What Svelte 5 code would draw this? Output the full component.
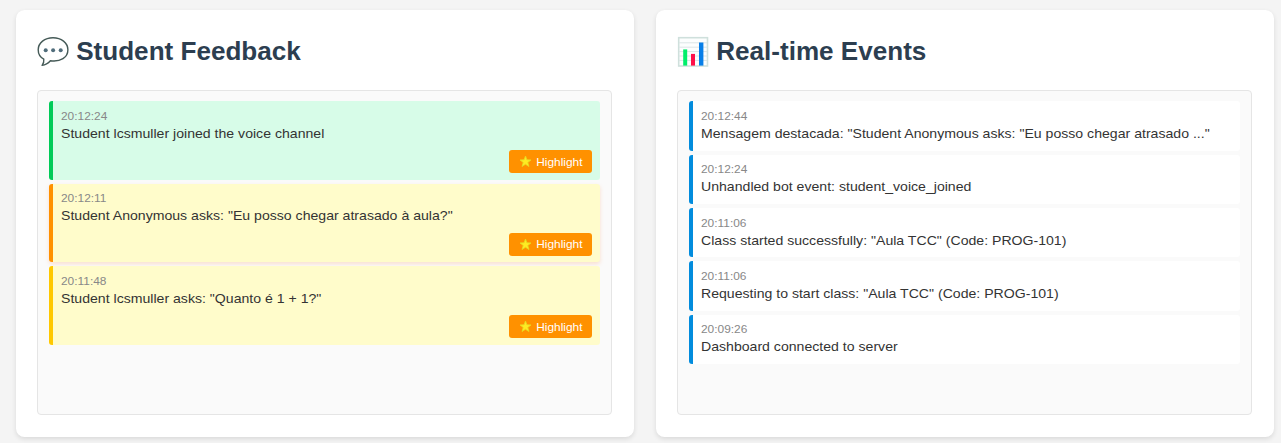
<script>
  const feedback = [
    { time: '20:12:24', text: 'Student lcsmuller joined the voice channel', kind: 'joined' },
    { time: '20:12:11', text: 'Student Anonymous asks: "Eu posso chegar atrasado à aula?"', kind: 'highlighted' },
    { time: '20:11:48', text: 'Student lcsmuller asks: "Quanto é 1 + 1?"', kind: 'question' }
  ];
  const events = [
    { time: '20:12:44', text: 'Mensagem destacada: "Student Anonymous asks: "Eu posso chegar atrasado ..."' },
    { time: '20:12:24', text: 'Unhandled bot event: student_voice_joined' },
    { time: '20:11:06', text: 'Class started successfully: "Aula TCC" (Code: PROG-101)' },
    { time: '20:11:06', text: 'Requesting to start class: "Aula TCC" (Code: PROG-101)' },
    { time: '20:09:26', text: 'Dashboard connected to server' }
  ];
</script>

<main>
  <section class="card">
    <h2>
      <svg class="icon" viewBox="0 0 32 32" aria-hidden="true">
        <path d="M16 1.700C7.800 1.700 1.200 6.800 1.200 13.700c0 4.200 2 7.500 5.600 9.400.3 2.800-.3 4.600-1.700 6.300 3.200-.4 6-2 8.300-4.600C23.600 26.200 30.900 21.500 30.900 13.700 30.900 6.800 24.200 1.700 16 1.700Z" fill="#fff" stroke="#455a57" stroke-width="1.400" stroke-linejoin="round" />
        <circle cx="8.700" cy="14.200" r="2" fill="#506d7b" />
        <circle cx="16.100" cy="14.200" r="2" fill="#506d7b" />
        <circle cx="23.700" cy="14.200" r="2" fill="#506d7b" />
      </svg>
      <span>Student Feedback</span>
    </h2>
    <div class="feed">
      {#each feedback as item}
        <article class="item {item.kind}">
          <time>{item.time}</time>
          <p>{item.text}</p>
          <button>
            <svg class="star" viewBox="0 0 14 14" aria-hidden="true">
              <path d="M7 1.100 8.500 5.200 12.900 5.350 9.450 8 10.700 12.400 7 9.900 3.300 12.400 4.550 8 1.100 5.350 5.500 5.200Z" fill="#ffeb22" stroke="#e4dc22" stroke-width=".9" stroke-linejoin="round" />
            </svg>
            <span class="label">Highlight</span>
          </button>
        </article>
      {/each}
    </div>
  </section>

  <section class="card">
    <h2>
      <svg class="icon" viewBox="0 0 32 32" aria-hidden="true">
        <rect x="1.700" y="1.700" width="28.800" height="28.300" fill="#fcfefe" stroke="#cfe0dc" stroke-width="1.600" />
        <path d="M2 6.800H30M2 11.200H30M2 15.600H30M2 20H30M2 24.400H30" stroke="#dce5e6" stroke-width="1" />
        <path d="M6.200 13.400h4v16.200h-4z" fill="#00ef6b" />
        <path d="M14 17.900h4v11.700h-4z" fill="#ff1049" />
        <path d="M22 6.500h4.400v23.100H22z" fill="#087fe8" />
      </svg>
      <span>Real-time Events</span>
    </h2>
    <div class="feed">
      {#each events as item}
        <article class="item event">
          <time>{item.time}</time>
          <p>{item.text}</p>
        </article>
      {/each}
    </div>
  </section>
</main>

<style>
  :global(body) {
    margin: 0;
    background: #f4f4f4;
    overflow: hidden;
  }
  main {
    box-sizing: border-box;
    width: 1281px;
    height: 443px;
    padding: 9.5px 6.8px 0 15.6px;
    display: grid;
    grid-template-columns: 1fr 1fr;
    align-items: start;
    gap: 21.4px;
    color: #333;
    font-family: "Liberation Sans", Arial, sans-serif;
  }
  .card {
    box-sizing: border-box;
    height: 427.3px;
    padding: 0 22.1px 0 21.6px;
    background: #fff;
    border-radius: 8.6px;
    box-shadow: 0 2px 5px rgba(0, 0, 0, .11);
  }
  h2 {
    display: flex;
    align-items: center;
    gap: 7px;
    height: 80.5px;
    padding-top: 3px;
    box-sizing: border-box;
    margin: 0;
    color: #2c3e50;
    font-size: 26.080px;
    line-height: 30px;
  }
  .icon {
    width: 32px;
    height: 32px;
    position: relative;
    top: .7px;
  }
  .feed {
    box-sizing: border-box;
    height: 325px;
    padding: 10.4px 10.8px;
    display: flex;
    flex-direction: column;
    gap: 4px;
    background: #fafafa;
    border: 1px solid #e5e5e5;
    border-radius: 4px;
  }
  .item {
    box-sizing: border-box;
    flex: none;
    display: flex;
    flex-direction: column;
    height: 78.5px;
    padding: 7.6px 8.1px 6.600px 7.700px;
    border-left: 4px solid;
    border-radius: 3px;
    font-size: 13.450px;
  }
  .joined {
    background: #d7fce8;
    border-color: #00cb58;
  }
  .highlighted {
    background: #fffccb;
    border-color: #ff9100;
    box-shadow: 0 2px 4px rgba(255, 120, 40, .2);
  }
  .question {
    background: #fffccb;
    border-color: #ffc800;
  }
  .event {
    height: 49.3px;
    background: #fff;
    border-color: #028cdd;
  }
  time {
    align-self: flex-start;
    color: #888;
    font-size: 11.450px;
    line-height: 14px;
    transform: scaleX(1.04);
    transform-origin: left;
  }
  p {
    align-self: flex-start;
    margin: 3px 0 0;
    line-height: 16px;
    white-space: nowrap;
    transform: scaleX(1.0490);
    transform-origin: left;
  }
  button {
    display: flex;
    align-items: center;
    align-self: flex-end;
    gap: 6px;
    height: 23px;
    margin: auto 0 0;
    padding: 0 9.600px 0 10px;
    background: #ff9100;
    border: 0;
    border-radius: 3px;
    color: #fff;
    font: 11.450px "Liberation Sans", Arial, sans-serif;
  }
  .label {
    transform: scaleX(1.04);
    transform-origin: right;
  }
  .star {
    width: 13px;
    height: 13px;
  }
</style>
